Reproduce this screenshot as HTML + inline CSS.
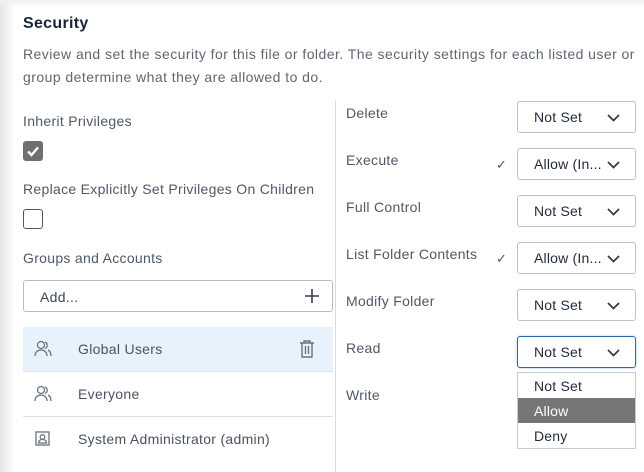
<!DOCTYPE html>
<html><head><style>
*{box-sizing:border-box;margin:0;padding:0}
body{width:644px;height:472px;overflow:hidden;background:#fff;font-family:"Liberation Sans",sans-serif;position:relative;color:#3d4656}
.sh{position:absolute;left:0;top:0;width:14px;height:472px;background:linear-gradient(to right,#e4e5e7,#fff)}
.sht{position:absolute;left:0;top:0;width:644px;height:8px;background:linear-gradient(to bottom,#f0f0f1,rgba(255,255,255,0))}
.a{position:absolute;white-space:nowrap}
h1{position:absolute;left:23px;top:15px;font-size:16px;font-weight:bold;color:#1a2438;letter-spacing:0.3px}
.d{left:23px;font-size:14px;color:#5f6672;letter-spacing:0.45px}
.l{font-size:14px;color:#4f5866;letter-spacing:0.3px}
.cb{position:absolute;left:23px;width:20px;height:20px;border-radius:3px}
.div{position:absolute;left:335px;top:100px;width:1px;height:372px;background:#d8dbe0}
.inp{position:absolute;left:23px;top:280px;width:310px;height:32px;border:1px solid #b8bec7;border-radius:3px}
.row{position:absolute;left:23px;width:310px;height:45px;border-bottom:1px solid #dde1e6}
.row span{position:absolute;left:55px;top:14px;font-size:14px;color:#4a5361;letter-spacing:0.3px}
.row svg{position:absolute;left:11px;top:13px}
.sel{position:absolute;left:517px;width:119px;height:32px;border:1px solid #bcc3cc;border-radius:3px;font-size:14px;color:#1f2a3c}
.sel span{position:absolute;left:16px;top:7px;letter-spacing:0.2px}
.sel svg{position:absolute;right:15px;top:12px}
.ck{position:absolute;left:496px;font-size:13px;color:#555}
</style></head><body>
<div class="sh"></div><div class="sht"></div>
<h1>Security</h1>
<div class="a d" style="top:46px">Review and set the security for this file or folder. The security settings for each listed user or</div>
<div class="a d" style="top:69px">group determine what they are allowed to do.</div>
<div class="a l" style="left:23px;top:113px">Inherit Privileges</div>
<div class="cb" style="top:141px;background:#6f6f6f"><svg width="20" height="20"><path d="M5 10.5l3.5 3.5 6.5-7.5" stroke="#fff" stroke-width="2.4" fill="none"/></svg></div>
<div class="a l" style="left:23px;top:181px">Replace Explicitly Set Privileges On Children</div>
<div class="cb" style="top:209px;border:1.5px solid #555"></div>
<div class="a l" style="left:23px;top:250px">Groups and Accounts</div>
<div class="inp"><span class="a" style="left:16px;top:8px;font-size:14px;color:#3d4656;letter-spacing:0.3px">Add...</span>
<svg class="a" style="left:281px;top:8px" width="14" height="14"><path d="M7 0v14M0 7h14" stroke="#333c4a" stroke-width="1.6"/></svg></div>
<div class="row" style="top:327px;background:#e8f2fc"><svg width="20" height="18" fill="none" stroke="#6b7280" stroke-width="1.3"><circle cx="7" cy="5" r="3.5"/><path d="M1 16c0-4 3-6 6-6s6 2 6 6M11 2a3.5 3.5 0 010 6.5M14 10c2 1 3 3 3 6"/></svg><span>Global Users</span>
<svg style="left:276px;top:13px" width="16" height="18" fill="none" stroke="#6b7280" stroke-width="1.4"><path d="M1 3h14M5 3V1h6v2M3 3v14h10V3M6.5 6v8M9.5 6v8"/></svg></div>
<div class="row" style="top:372px"><svg width="20" height="18" fill="none" stroke="#6b7280" stroke-width="1.3"><circle cx="7" cy="5" r="3.5"/><path d="M1 16c0-4 3-6 6-6s6 2 6 6M11 2a3.5 3.5 0 010 6.5M14 10c2 1 3 3 3 6"/></svg><span>Everyone</span></div>
<div class="row" style="top:417px;border-bottom:none"><svg width="18" height="18" fill="none" stroke="#6b7280" stroke-width="1.3"><rect x="2" y="2" width="13" height="13"/><circle cx="8.5" cy="7" r="2.3"/><path d="M4.5 13c0-2.5 2-3.5 4-3.5s4 1 4 3.5z"/></svg><span>System Administrator (admin)</span></div>
<div class="div"></div>
<div class="a l" style="left:346px;top:105px">Delete</div>
<div class="a l" style="left:346px;top:152px">Execute</div>
<div class="a l" style="left:346px;top:199px">Full Control</div>
<div class="a l" style="left:346px;top:246px">List Folder Contents</div>
<div class="a l" style="left:346px;top:293px">Modify Folder</div>
<div class="a l" style="left:346px;top:340px">Read</div>
<div class="a l" style="left:346px;top:387px">Write</div>
<div class="ck" style="top:157px">✓</div>
<div class="ck" style="top:251px">✓</div>
<div class="sel" style="top:101px"><span>Not Set</span><svg width="13" height="8"><path d="M1 1l5.5 5.5L12 1" stroke="#333c4a" stroke-width="1.8" fill="none"/></svg></div>
<div class="sel" style="top:148px"><span>Allow (In...</span><svg width="13" height="8"><path d="M1 1l5.5 5.5L12 1" stroke="#333c4a" stroke-width="1.8" fill="none"/></svg></div>
<div class="sel" style="top:195px"><span>Not Set</span><svg width="13" height="8"><path d="M1 1l5.5 5.5L12 1" stroke="#333c4a" stroke-width="1.8" fill="none"/></svg></div>
<div class="sel" style="top:242px"><span>Allow (In...</span><svg width="13" height="8"><path d="M1 1l5.5 5.5L12 1" stroke="#333c4a" stroke-width="1.8" fill="none"/></svg></div>
<div class="sel" style="top:289px"><span>Not Set</span><svg width="13" height="8"><path d="M1 1l5.5 5.5L12 1" stroke="#333c4a" stroke-width="1.8" fill="none"/></svg></div>
<div class="sel" style="top:336px;border:1.5px solid #2b6cb0;box-shadow:0 0 2px #9cc3ee"><span>Not Set</span><svg width="13" height="8"><path d="M1 1l5.5 5.5L12 1" stroke="#333c4a" stroke-width="1.8" fill="none"/></svg></div>
<div class="a" style="left:517px;top:372px;width:119px;height:77px;border:1px solid #c8cacd;background:#fff;font-size:14px;color:#1f2a3c;letter-spacing:0.2px">
<div style="height:25px;padding:5px 0 0 16px">Not Set</div>
<div style="height:25px;padding:5px 0 0 16px;background:#767676;color:#fff">Allow</div>
<div style="height:25px;padding:5px 0 0 16px">Deny</div>
</div>
</body></html>
